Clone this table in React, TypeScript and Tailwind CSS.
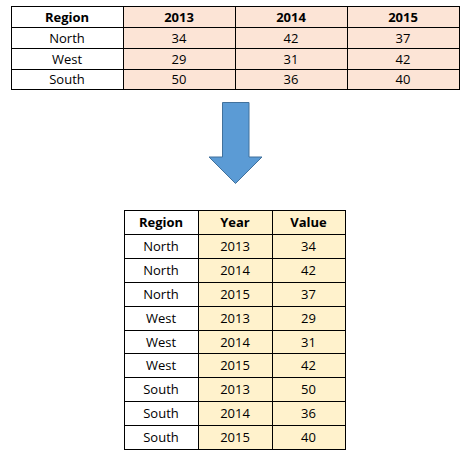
const wide = [
  { region: "North", values: [34, 42, 37] },
  { region: "West", values: [29, 31, 42] },
  { region: "South", values: [50, 36, 40] },
];

const years = [2013, 2014, 2015];

const long = wide.flatMap((r) =>
  r.values.map((v, i) => ({ region: r.region, year: years[i], value: v }))
);

const cell = "border border-black text-center align-middle p-0";

export default function App() {
  return (
    <div className="w-[471px] h-[459px] bg-white text-[#000] font-['Open_Sans',sans-serif] text-[13px] leading-none">
      <div className="pt-[6px] flex flex-col items-center">
        {/* wide table */}
        <table className="border-collapse table-fixed w-[449px] ml-[-1px]">
          <tbody>
            <tr className="h-[21px]">
              <td className={`${cell} font-bold w-[112px]`}>Region</td>
              {years.map((y) => (
                <td key={y} className={`${cell} font-bold bg-[#fce4d6]`}>{y}</td>
              ))}
            </tr>
            {wide.map((r, i) => (
              <tr key={r.region} className={i === 2 ? "h-[20px]" : "h-[21px]"}>
                <td className={cell}>{r.region}</td>
                {r.values.map((v, j) => (
                  <td key={j} className={`${cell} bg-[#fce4d6]`}>{v}</td>
                ))}
              </tr>
            ))}
          </tbody>
        </table>

        {/* arrow */}
        <svg width="56" height="84" viewBox="0 0 56 84" className="mt-[12px] ml-[1px]">
          <path
            d="M14.5 0.5 H41 V55 H54 L27.5 81.5 L1 55 H14.5 Z"
            fill="#5b9bd5"
            stroke="#41719c"
            strokeWidth="1"
          />
        </svg>

        {/* long table */}
        <table className="border-collapse table-fixed w-[222px] mt-[24px] ml-[-2px]">
          <tbody>
            <tr className="h-[24px]">
              <td className={`${cell} font-bold w-[74px]`}>Region</td>
              <td className={`${cell} font-bold w-[74px] bg-[#fff2cc]`}>Year</td>
              <td className={`${cell} font-bold bg-[#fff2cc]`}>Value</td>
            </tr>
            {long.map((r, i) => (
              <tr key={i} className={i === 4 ? "h-[23px]" : "h-[24px]"}>
                <td className={cell}>{r.region}</td>
                <td className={`${cell} bg-[#fff2cc]`}>{r.year}</td>
                <td className={`${cell} bg-[#fff2cc]`}>{r.value}</td>
              </tr>
            ))}
          </tbody>
        </table>
      </div>
    </div>
  );
}
